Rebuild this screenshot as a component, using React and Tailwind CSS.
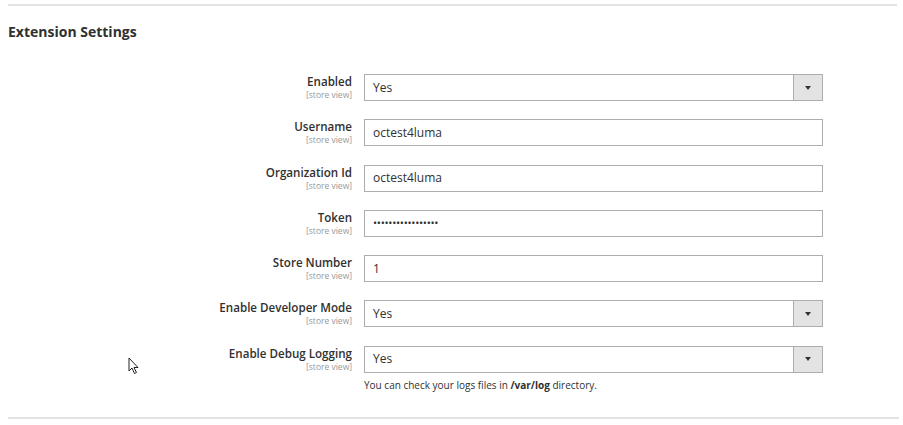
import React from "react";

const fields = [
  { label: "Enabled", value: "Yes", select: true },
  { label: "Username", value: "octest4luma" },
  { label: "Organization Id", value: "octest4luma" },
  { label: "Token", value: "•••••••••••••••••", secret: true },
  { label: "Store Number", value: "1" },
  { label: "Enable Developer Mode", value: "Yes", select: true },
  { label: "Enable Debug Logging", value: "Yes", select: true, note: true },
];

const Field = ({ field }) => (
  <div className="flex items-start">
    <div className="w-[344px] text-right pt-[1px]">
      <div className="text-[11.6px] leading-[14px] font-semibold text-[#303030]">{field.label}</div>
      <div className="text-[8.5px] leading-[11px] text-[#999]">[store view]</div>
    </div>
    <div className="ml-3 w-[459px]">
      <div className="flex h-[27px] border border-[#adadad] bg-white">
        <div
          className={`flex-1 flex items-center pl-2 text-[#303030] ${
            field.secret ? "text-[11px] tracking-[-0.3px]" : "text-[12px]"
          }`}
        >
          {field.value}
        </div>
        {field.select && (
          <div className="w-[29px] border-l border-[#adadad] bg-[#e3e3e3] flex items-center justify-center">
            <div className="w-0 h-0 border-l-[3.5px] border-r-[3.5px] border-t-[4px] border-l-transparent border-r-transparent border-t-[#333]" />
          </div>
        )}
      </div>
      {field.note && (
        <div className="mt-[5px] text-[10px] leading-[14px] text-[#303030]">
          You can check your logs files in <b>/var/log</b> directory.
        </div>
      )}
    </div>
  </div>
);

export default function App() {
  return (
    <div className="relative w-[903px] h-[425px] bg-white font-['Open_Sans',sans-serif] overflow-hidden">
      <div className="pt-[4px] px-2">
        <div className="h-[2px] bg-[#e3e3e3] mr-[-2px]" />
        <h2 className="mt-[16px] text-[14px] leading-[20px] font-bold text-[#303030]">Extension Settings</h2>
        <div className="mt-[32px] flex flex-col gap-[18.3px]">
          {fields.map((f) => (
            <Field key={f.label} field={f} />
          ))}
        </div>
        <div className="mt-[25px] h-[2px] bg-[#e3e3e3] mr-[-4px]" />
      </div>
      <svg className="absolute left-[128px] top-[357px]" width="12" height="18" viewBox="0 0 12 18">
        <path d="M1 1 L1 14 L4 11 L6.5 16.5 L8.5 15.5 L6 10.5 L10 10.5 Z" fill="#fff" stroke="#222" strokeWidth="1" strokeLinejoin="round" />
      </svg>
    </div>
  );
}
